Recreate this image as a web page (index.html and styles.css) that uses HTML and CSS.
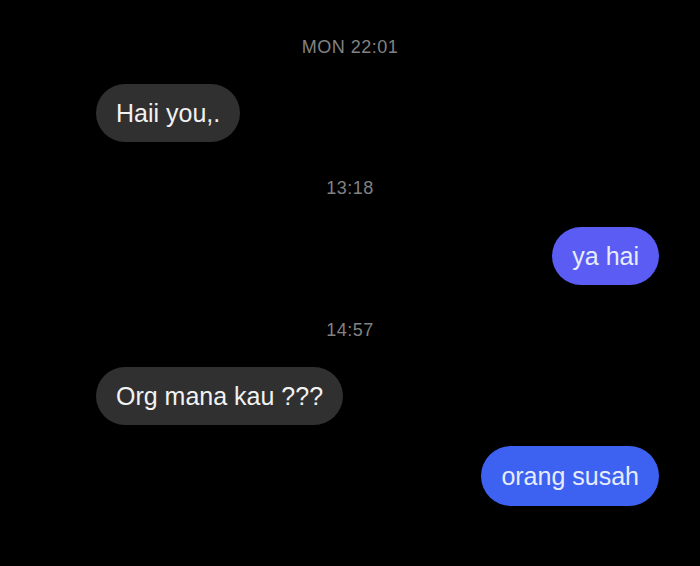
FILE: index.html
```html
<!DOCTYPE html>
<html lang="ms">
<head>
<meta charset="utf-8">
<title>Chat</title>
<link rel="stylesheet" href="styles.css">
</head>
<body>
<div class="chat">
  <div class="stamp stamp-first">MON 22:01</div>
  <div class="row in gap-a"><div class="bubble grey">Haii you,.</div></div>
  <div class="stamp gap-b">13:18</div>
  <div class="row out gap-c"><div class="bubble violet">ya hai</div></div>
  <div class="stamp gap-d">14:57</div>
  <div class="row in gap-a"><div class="bubble grey">Org mana kau ???</div></div>
  <div class="row out gap-e"><div class="bubble blue">orang susah</div></div>
</div>
</body>
</html>
```
FILE: styles.css
```css
html, body {
  margin: 0;
  padding: 0;
  background: #000;
  height: 100%;
}
body {
  font-family: "Liberation Sans", Arial, sans-serif;
}
.chat {
  display: flex;
  flex-direction: column;
}
.stamp {
  text-align: center;
  color: #828282;
  font-size: 18px;
  line-height: 20px;
  letter-spacing: 0.5px;
}
.stamp-first { margin-top: 37px; }
.row { display: flex; }
.row.in { padding-left: 96px; justify-content: flex-start; }
.row.out { padding-right: 41px; justify-content: flex-end; }
.gap-a { margin-top: 27px; }
.gap-b { margin-top: 36px; }
.gap-c { margin-top: 29px; }
.gap-d { margin-top: 35px; }
.gap-e { margin-top: 21px; }
.bubble {
  font-size: 25px;
  line-height: 28px;
  padding: 15px 20px;
  border-radius: 30px;
  color: #f2f2f2;
  white-space: nowrap;
}
.grey { background: #303030; }
.violet { background: #5a5cf3; color: #e6ecfb; }
.blue { background: #3d61f0; color: #e6ecfb; padding-top: 16px; padding-bottom: 16px; }
```
